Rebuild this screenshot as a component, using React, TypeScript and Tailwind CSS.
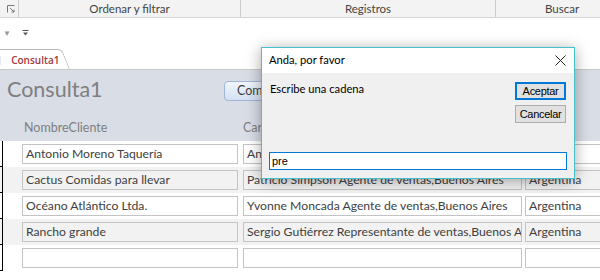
import React from "react";

const rows = [
  { nombre: "Antonio Moreno Taquería", cargo: "Antonio Moreno Propietario,México D.F.", pais: "México" },
  { nombre: "Cactus Comidas para llevar", cargo: "Patricio Simpson Agente de ventas,Buenos Aires", pais: "Argentina" },
  { nombre: "Océano Atlántico Ltda.", cargo: "Yvonne Moncada Agente de ventas,Buenos Aires", pais: "Argentina" },
  { nombre: "Rancho grande", cargo: "Sergio Gutiérrez Representante de ventas,Buenos Aires", pais: "Argentina" },
  { nombre: "", cargo: "", pais: "" },
];

function Launcher() {
  return (
    <svg width="8" height="8" viewBox="0 0 8 8" className="text-[#777]">
      <path d="M0.5 7.5V0.5H7.5" fill="none" stroke="currentColor" />
      <path d="M3 3L7 7M7 4.5V7H4.5" fill="none" stroke="currentColor" />
    </svg>
  );
}

function QatCustomize() {
  return (
    <svg width="7" height="7" viewBox="0 0 7 7" className="text-[#555]">
      <path d="M0.5 1.5H6.5" stroke="currentColor" />
      <path d="M1 3.5H6L3.5 6.5Z" fill="currentColor" />
    </svg>
  );
}

function Field({ text, width }: { text: string; width: string }) {
  return (
    <div
      className={`${width} h-[20px] shrink-0 border border-[#c3c3c3] px-[3px] leading-[18px] whitespace-nowrap overflow-hidden text-[#404040]`}
    >
      {text}
    </div>
  );
}

export default function App() {
  return (
    <div className="relative w-[600px] h-[280px] overflow-hidden bg-white font-['Lato',sans-serif]">
      {/* ribbon group labels */}
      <div className="flex h-[18px] bg-[#f3f3f3] border-b border-[#d6d6d6] text-[11.5px] text-[#444] leading-[17px]">
        <div className="w-[19px] shrink-0 border-r border-[#cdcdcd] flex items-end justify-center pb-[4px] pl-[4px]">
          <Launcher />
        </div>
        <div className="w-[222px] shrink-0 border-r border-[#cdcdcd] text-center">Ordenar y filtrar</div>
        <div className="w-[255px] shrink-0 border-r border-[#cdcdcd] text-center">Registros</div>
        <div className="pl-[49px]">Buscar</div>
      </div>

      {/* quick access */}
      <div className="flex items-center h-[29px] gap-[11px] pl-[3px] text-[#999]">
        <span className="text-[8px]">▼</span>
        <QatCustomize />
      </div>

      {/* document tab */}
      <div className="flex items-end h-[23px] border-b border-[#c9c9c9]">
        <div className="-ml-[6px] h-[20px] w-[76px] skew-x-[22deg] origin-bottom-left border border-b-0 border-[#b9b9b9] rounded-t-[5px] bg-white">
          <div className="-skew-x-[22deg] flex items-center h-full gap-[11px] pl-[1px] pt-[2px]">
            <div className="w-[8px] h-[9px] border border-[#8a9bb5] bg-[#dfe6f0]" />
            <span className="text-[10px] font-semibold text-[#a4373a] font-['Open_Sans',sans-serif]">Consulta1</span>
          </div>
        </div>
      </div>

      {/* form header */}
      <div className="bg-[#d8dde6] h-[71px] flex flex-col">
        <div className="flex items-center h-[40px] pl-[7px]">
          <span className="text-[21.5px] text-[#7f7f7f] w-[217px] leading-none">Consulta1</span>
          <button className="h-[20px] w-[90px] rounded-[4px] border border-[#9fb6d6] bg-gradient-to-b from-[#f2f6fc] to-[#d3e0f2] text-[12.5px] text-[#404040] text-left pl-[12px] leading-[18px] mt-[1px]">
            Comando
          </button>
        </div>
        <div className="flex items-center h-[31px] pt-[6px] text-[12.5px] text-[#7f7f7f]">
          <span className="w-[243px] pl-[24px]">NombreCliente</span>
          <span>CargoContacto</span>
        </div>
      </div>

      {/* detail rows */}
      {rows.map((r, i) => (
        <div key={i} className={`flex items-center h-[26px] text-[12.2px] ${i % 2 === 1 ? "bg-[#f2f2f2]" : "bg-white"}`}>
          <div className="w-[3px] h-full shrink-0 border-r border-b border-black" />
          <div className="w-[19px] shrink-0" />
          <Field text={r.nombre} width="w-[216px]" />
          <div className="w-[5px] shrink-0" />
          <Field text={r.cargo} width="w-[279px]" />
          <div className="w-[3px] shrink-0" />
          <Field text={r.pais} width="w-[110px]" />
        </div>
      ))}

      {/* input box dialog */}
      <div className="absolute left-[261px] top-[47px] w-[314px] h-[132px] border border-[#45c0cb] bg-[#f0f0f0] shadow-[0_2px_14px_rgba(0,0,0,0.35)] flex flex-col text-[11.2px] text-black">
        <div className="h-[25px] bg-white flex items-center justify-between pl-[7px] pr-[8px]">
          <span>Anda, por favor</span>
          <svg width="11" height="11" viewBox="0 0 11 11">
            <path d="M0.5 0.5L10.5 10.5M10.5 0.5L0.5 10.5" stroke="#222" strokeWidth="1" />
          </svg>
        </div>
        <div className="flex justify-between pl-[8px] pr-[8px] pt-[9px]">
          <span className="leading-[14px]">Escribe una cadena</span>
          <div className="flex flex-col gap-[5px] font-['Liberation_Sans',sans-serif] text-[11px] tracking-[-0.3px]">
            <div className="w-[51px] h-[18px] border-2 border-[#0078d7] bg-[#e1e1e1] flex items-center justify-center">
              Aceptar
            </div>
            <div className="w-[51px] h-[18px] border border-[#adadad] bg-[#e1e1e1] flex items-center justify-center">
              Cancelar
            </div>
          </div>
        </div>
        <div className="mt-auto mb-[8px] mx-[7px] h-[18px] border border-[#0078d7] bg-white pl-[2px] font-['Liberation_Sans',sans-serif] text-[11px] leading-[16px]">
          pre
        </div>
      </div>
    </div>
  );
}
